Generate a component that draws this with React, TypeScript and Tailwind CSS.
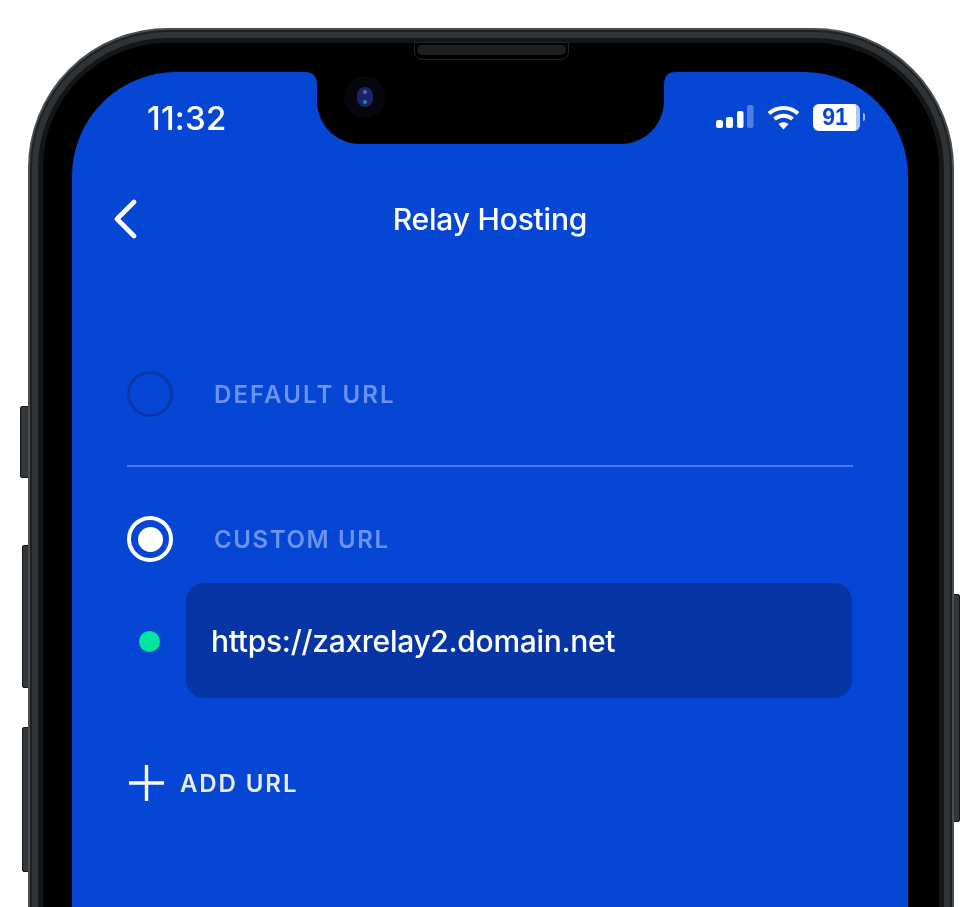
export default function App() {
  return (
    <div className="h-[907px] w-[980px] overflow-hidden bg-white pl-[28px] pt-[28px] font-['Inter',sans-serif] text-white blur-[0.7px]">
      <div className="relative h-[1100px] w-[926px]">
        {/* side buttons */}
        <div className="absolute -left-[8px] top-[378px] h-[72px] w-[9px] rounded-l-[2px] border border-[#141618] bg-[#33373a]" />
        <div className="absolute -left-[6px] top-[517px] h-[143px] w-[7px] rounded-l-[2px] border border-[#141618] bg-[#33373a]" />
        <div className="absolute -left-[6px] top-[699px] h-[145px] w-[7px] rounded-l-[2px] border border-[#141618] bg-[#33373a]" />
        <div className="absolute -right-[6px] top-[566px] h-[228px] w-[7px] rounded-r-[2px] border border-[#141618] bg-[#33373a]" />

        <div className="relative h-full rounded-[140px] border-[2px] border-[#4a4e51] bg-[#1e2022] p-[2px]">
          <div className="h-full rounded-[136px] border-[6px] border-[#303336] bg-[#141516] p-[5px]">
            <div className="h-full rounded-[124px] bg-black px-[29px] pt-[29px]">
              <Screen />
            </div>
          </div>
          {/* speaker */}
          <div className="absolute left-[384px] top-[12px] h-[18px] w-[155px] rounded-b-[8px] border border-[#222426] bg-black p-[2px]">
            <div className="h-[10px] rounded-full bg-[#1c1e20]" />
          </div>
        </div>
      </div>
    </div>
  )
}

function Screen() {
  return (
    <div className="relative h-full w-[836px] rounded-t-[104px] bg-[#0646d4] px-[55px] pt-[23px]">
      <Notch />

      {/* status bar */}
      <div className="-mx-[55px] flex h-[46px] items-center justify-between pl-[75px] pr-[43px]">
        <span className="text-[33px] font-medium leading-none tracking-[0.2px]">11:32</span>
        <div className="flex items-center pb-[2px]">
          <svg width="38" height="24" viewBox="0 0 38 24" fill="#fff">
            <rect x="0" y="15" width="7" height="8" rx="2.5" />
            <rect x="10" y="12" width="7" height="11" rx="2" />
            <rect x="21" y="6" width="6.5" height="17" rx="2" />
            <rect x="31" y="0" width="6.5" height="23" rx="2" fill="#fff" fillOpacity="0.3" />
          </svg>
          <svg className="ml-[13px]" width="33" height="25" viewBox="0 0 33 25" fill="none" stroke="#fff" strokeWidth="4">
            <path d="M2 8.5C10 1 23 1 31 8.5" />
            <path d="M7.5 14C12.5 9.5 20.5 9.5 25.5 14" />
            <path d="M16.5 24.5l-5-5.5c3-2.4 7-2.4 10 0z" fill="#fff" stroke="none" />
          </svg>
          <div className="ml-[13px] flex items-center">
            <div className="flex h-[27px] w-[47px] items-center justify-center rounded-[6px] bg-[linear-gradient(90deg,#fff_91%,#ffffffb0_91%)] pr-[3px] font-['Liberation_Sans',sans-serif] text-[23px] font-bold leading-none text-[#0646d4]">
              91
            </div>
            <div className="ml-[3px] h-[8px] w-[2px] rounded-r-full bg-white/60" />
          </div>
        </div>
      </div>

      {/* nav */}
      <div className="-mx-[55px] mt-[48px] flex h-[60px] items-center justify-center">
        <svg className="absolute left-[40px]" width="26" height="40" viewBox="0 0 26 40" fill="none">
          <path d="M22 3L5 20l17 17" stroke="#fff" strokeWidth="4.6" strokeLinecap="round" strokeLinejoin="round" />
        </svg>
        <span className="text-[30px] font-medium leading-none tracking-[-0.2px]">Relay Hosting</span>
      </div>

      {/* default url */}
      <div className="mt-[122px] flex h-[46px] items-center gap-[41px]">
        <div className="h-[46px] w-[46px] rounded-full border-[3px] border-[#0a38aa]" />
        <span className="pt-[2px] text-[24px] font-semibold leading-none tracking-[2.1px] text-[#6b93ef]">DEFAULT URL</span>
      </div>

      <div className="mt-[48px] h-[2px] bg-[#4a7ae6]" />

      {/* custom url */}
      <div className="mt-[49px] flex h-[46px] items-center gap-[41px]">
        <div className="flex h-[46px] w-[46px] items-center justify-center rounded-full border-[4px] border-white">
          <div className="h-[25px] w-[25px] rounded-full bg-white" />
        </div>
        <span className="pt-[2px] text-[24px] font-semibold leading-none tracking-[1.6px] text-[#6b93ef]">CUSTOM URL</span>
      </div>

      <div className="mt-[21px] flex items-center">
        <div className="ml-[12px] mt-[2px] h-[21px] w-[21px] rounded-full bg-[#00e5a0]" />
        <div className="ml-[26px] flex h-[115px] w-[666px] items-center rounded-[18px] bg-[#0735a6] pl-[25px] text-[30px] font-medium leading-none tracking-[-0.3px]">
          https://zaxrelay2.domain.net
        </div>
      </div>

      {/* add url */}
      <div className="mt-[67px] flex h-[36px] items-center gap-[16px] pl-[2px]">
        <svg width="35" height="36" viewBox="0 0 35 36" fill="none">
          <path d="M17.5 1v34M0.5 18h34" stroke="#fff" strokeWidth="3.4" strokeLinecap="round" />
        </svg>
        <span className="pt-[2px] text-[24px] font-semibold leading-none tracking-[1.9px] text-[#e6edfb]">ADD URL</span>
      </div>
    </div>
  )
}

function Notch() {
  return (
    <>
      <svg className="absolute left-[233px] top-0" width="371" height="72" viewBox="0 0 371 72" fill="#000">
        <path d="M0 0C8 0 12 4 12 13V28C12 54 32 72 56 72H315C339 72 359 54 359 28V13C359 4 363 0 371 0Z" />
      </svg>
      {/* camera */}
      <div className="absolute left-[272px] top-[4px] flex h-[42px] w-[42px] items-center justify-center rounded-full bg-[#07060d]">
        <div className="flex h-[20px] w-[16px] flex-col items-center justify-between rounded-full bg-[#18236a] py-[3px]">
          <div className="h-[4px] w-[4px] rounded-full bg-[#5a66b0]" />
          <div className="h-[4px] w-[4px] rounded-full bg-[#2f8a8a]" />
        </div>
      </div>
    </>
  )
}
